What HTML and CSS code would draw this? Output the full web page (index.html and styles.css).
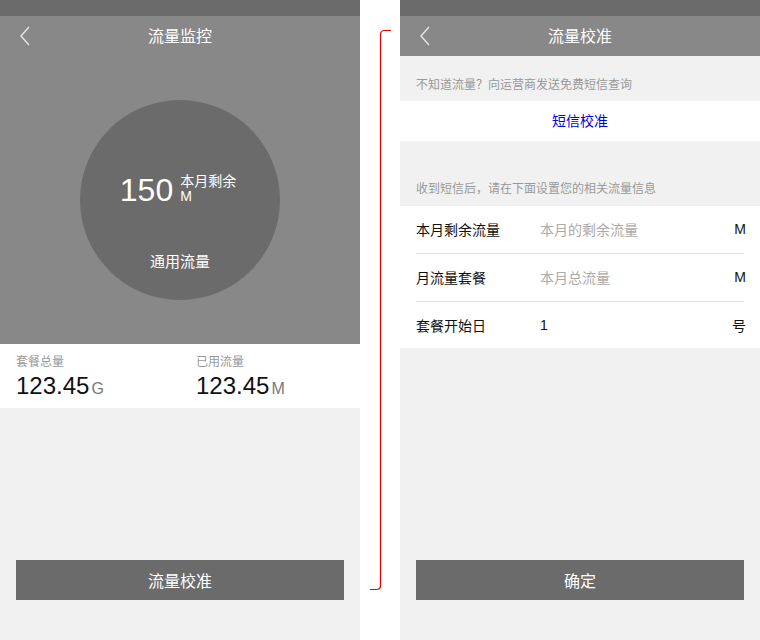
FILE: index.html
```html
<!DOCTYPE html>
<html lang="zh-CN">
<head>
<meta charset="utf-8">
<title>流量监控</title>
<link rel="stylesheet" href="styles.css">
</head>
<body>
<div class="stage">
  <section class="screen">
    <div class="status"></div>
    <header class="bar">
      <svg class="back" width="12" height="20" viewBox="0 0 12 20"><path d="M10 1 L2 10 L10 19" fill="none" stroke="#e6e6e6" stroke-width="1.4"/></svg>
      <h1>流量监控</h1>
    </header>
    <div class="hero">
      <div class="dial">
        <div class="remain">
          <span class="num">150</span>
          <span class="meta"><span>本月剩余</span><span>M</span></span>
        </div>
        <div class="kind">通用流量</div>
      </div>
    </div>
    <div class="stats">
      <div class="stat">
        <div class="stat-label">套餐总量</div>
        <div class="stat-value">123.45<span class="unit">G</span></div>
      </div>
      <div class="stat">
        <div class="stat-label">已用流量</div>
        <div class="stat-value">123.45<span class="unit">M</span></div>
      </div>
    </div>
    <div class="fill">
      <button class="btn">流量校准</button>
    </div>
  </section>

  <div class="link">
    <svg width="40" height="640" viewBox="0 0 40 640"><path d="M31 30.5 H24.5 Q20.5 30.5 20.5 34.5 V585.5 Q20.5 589.5 16.5 589.5 H10" fill="none" stroke="#e60000" stroke-width="1.2"/></svg>
  </div>

  <section class="screen">
    <div class="status"></div>
    <header class="bar">
      <svg class="back" width="12" height="20" viewBox="0 0 12 20"><path d="M10 1 L2 10 L10 19" fill="none" stroke="#e6e6e6" stroke-width="1.4"/></svg>
      <h1>流量校准</h1>
    </header>
    <p class="hint hint-top">不知道流量？向运营商发送免费短信查询</p>
    <div class="sms">短信校准</div>
    <p class="hint hint-mid">收到短信后，请在下面设置您的相关流量信息</p>
    <div class="form">
      <div class="row">
        <span class="row-label">本月剩余流量</span>
        <span class="row-input placeholder">本月的剩余流量</span>
        <span class="row-unit">M</span>
      </div>
      <div class="row">
        <span class="row-label">月流量套餐</span>
        <span class="row-input placeholder">本月总流量</span>
        <span class="row-unit">M</span>
      </div>
      <div class="row">
        <span class="row-label">套餐开始日</span>
        <span class="row-input">1</span>
        <span class="row-unit">号</span>
      </div>
    </div>
    <div class="fill">
      <button class="btn">确定</button>
    </div>
  </section>
</div>
</body>
</html>
```
FILE: styles.css
```css
* { box-sizing: border-box; }
html, body { margin: 0; padding: 0; background: #fff; }
body {
  font-family: "Liberation Sans", Arial, "Noto Sans CJK SC", sans-serif;
  width: 760px;
  height: 640px;
  overflow: hidden;
}
.stage {
  display: flex;
  width: 760px;
  height: 640px;
}
.screen {
  width: 360px;
  height: 640px;
  display: flex;
  flex-direction: column;
  background: #f1f1f1;
}
.link { width: 40px; height: 640px; }
.link svg { display: block; }

.status { height: 16px; background: #6b6b6b; flex: none; }
.bar {
  height: 40px;
  flex: none;
  background: #888888;
  display: flex;
  align-items: center;
  justify-content: center;
  position: relative;
}
.bar h1 {
  margin: 0 0 2px;
  font-size: 16px;
  font-weight: normal;
  color: #fff;
}
.back { position: absolute; left: 19px; top: 10px; }

/* overview screen */
.hero {
  height: 288px;
  flex: none;
  background: #888888;
  display: flex;
  justify-content: center;
  padding-top: 44px;
}
.dial {
  width: 200px;
  height: 200px;
  border-radius: 50%;
  background: #6b6b6b;
  color: #fff;
  display: flex;
  flex-direction: column;
  align-items: center;
}
.remain {
  display: flex;
  align-items: flex-start;
  margin-top: 72px;
  margin-left: -4px;
}
.num { font-size: 32px; line-height: 36px; }
.meta {
  display: flex;
  flex-direction: column;
  font-size: 14px;
  line-height: 15px;
  margin-left: 7px;
  margin-top: 2px;
}
.kind { font-size: 15px; margin-top: 42px; }

.stats {
  height: 64px;
  flex: none;
  background: #fff;
  display: flex;
  padding: 11px 0 0 16px;
}
.stat { width: 180px; flex: none; }
.stat-label { font-size: 12px; color: #999; line-height: 15px; }
.stat-value { font-size: 24px; color: #111; line-height: 30px; margin-top: 1px; }
.unit { font-size: 16px; color: #777; margin-left: 2px; }

.fill {
  flex: 1;
  display: flex;
  flex-direction: column;
  justify-content: flex-end;
  padding: 0 16px 40px;
}
.btn {
  height: 40px;
  border: 0;
  background: #6b6b6b;
  color: #fff;
  font-family: inherit;
  font-size: 16px;
  width: 100%;
}

/* calibration screen */
.hint {
  margin: 0;
  font-size: 12px;
  color: #999;
  padding-left: 16px;
  display: flex;
  align-items: flex-end;
}
.hint-top { height: 45px; padding-bottom: 9px; }
.hint-mid { height: 65px; padding-bottom: 10px; }
.sms {
  height: 40px;
  background: #fff;
  color: #0000e6;
  font-size: 14px;
  display: flex;
  align-items: center;
  justify-content: center;
  padding-bottom: 2px;
}
.form { background: #fff; padding: 0 16px; }
.row {
  height: 48px;
  display: flex;
  align-items: center;
  font-size: 14px;
  border-bottom: 1px solid #dddddd;
  padding-bottom: 1px;
}
.row:last-child { border-bottom: 0; height: 46px; }
.row-label { width: 124px; color: #111; }
.row-input { flex: 1; color: #111; }
.row-input.placeholder { color: #aaa; }
.row-unit { color: #111; margin-right: -2px; }
```
